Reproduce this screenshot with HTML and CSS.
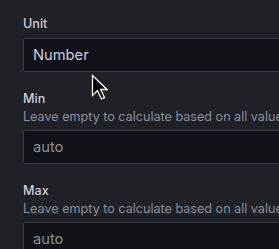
FILE: index.html
```html
<!DOCTYPE html>
<html>
<head>
<meta charset="utf-8">
<link rel="stylesheet" href="styles.css">
</head>
<body>
<div class="panel">
  <div class="field">
    <div class="label">Unit</div>
    <div class="input"><span class="value">Number</span></div>
  </div>
  <div class="field">
    <div class="label">Min</div>
    <div class="desc">Leave empty to calculate based on all values</div>
    <div class="input"><span class="placeholder">auto</span></div>
  </div>
  <div class="field">
    <div class="label">Max</div>
    <div class="desc">Leave empty to calculate based on all values</div>
    <div class="input"><span class="placeholder">auto</span></div>
  </div>
</div>
<svg class="cursor" width="17" height="27" viewBox="0 0 17 27">
  <path d="M1.5 1.5 L1.5 21.5 L6.5 16.5 L10.5 25 L13.5 23.6 L9.7 15.5 L16 15.5 Z" fill="#000" stroke="#fff" stroke-width="1.3" stroke-linejoin="miter"/>
</svg>
</body>
</html>
```
FILE: styles.css
```css
html, body {
  margin: 0;
  padding: 0;
  background: #1f2127;
  overflow: hidden;
  width: 279px;
  height: 249px;
}
body {
  font-family: Inter, "Noto Sans", sans-serif;
  position: relative;
}
.panel {
  padding: 16px 0 0 23px;
  width: 320px;
}
.field {
  margin-bottom: 19px;
}
.label {
  font-size: 12.6px;
  line-height: 15px;
  font-weight: 500;
  color: #ccccdc;
  margin-bottom: 7px;
}
.desc {
  font-size: 12.6px;
  line-height: 15px;
  color: #8a909c;
  margin-bottom: 6px;
  white-space: nowrap;
}
.label + .desc {
  margin-top: -4px;
}
.input {
  height: 34px;
  box-sizing: border-box;
  border: 1px solid #3b3d44;
  border-radius: 2px;
  background: #111217;
  display: flex;
  align-items: center;
  padding: 0 9px;
  font-size: 14.7px;
}
.value {
  color: #ccccdc;
}
.placeholder {
  color: #8e9099;
}
.cursor {
  position: absolute;
  left: 91px;
  top: 74px;
}
```
